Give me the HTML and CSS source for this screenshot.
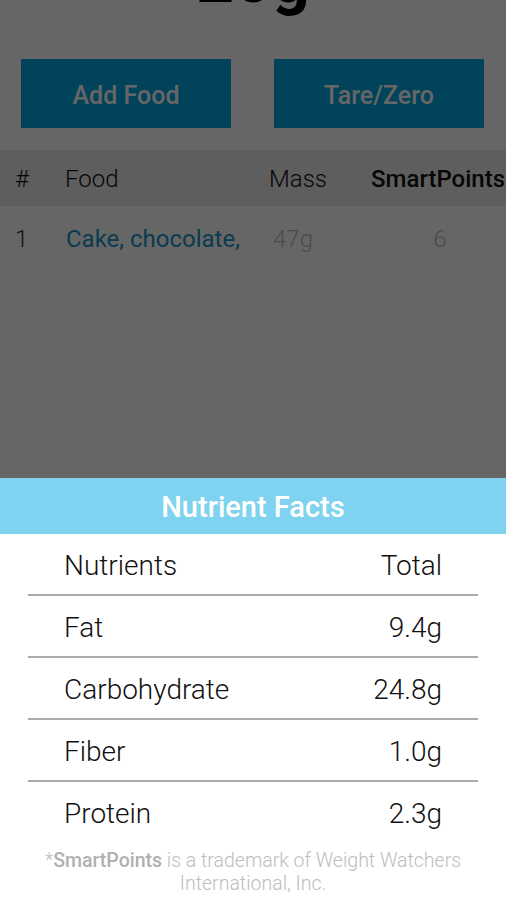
FILE: index.html
```html
<!DOCTYPE html>
<html lang="en">
<head>
<meta charset="utf-8">
<title>Scale</title>
<link rel="stylesheet" href="styles.css">
</head>
<body>
<div class="app">
  <div class="weight">20g</div>
  <div class="actions">
    <button class="btn">Add Food</button>
    <button class="btn">Tare/Zero</button>
  </div>
  <div class="food-table">
    <div class="food-row head">
      <span>#</span><span>Food</span><span>Mass</span><span class="sp">SmartPoints</span>
    </div>
    <div class="food-row">
      <span class="num">1</span><span class="food">Cake, chocolate,</span><span class="mass">47g</span><span class="pts">6</span>
    </div>
  </div>
</div>
<div class="overlay"></div>
<div class="sheet">
  <div class="sheet-title">Nutrient Facts</div>
  <div class="nutrients">
    <div class="n-row"><span>Nutrients</span><span>Total</span></div>
    <div class="n-row"><span>Fat</span><span>9.4g</span></div>
    <div class="n-row"><span>Carbohydrate</span><span>24.8g</span></div>
    <div class="n-row"><span>Fiber</span><span>1.0g</span></div>
    <div class="n-row"><span>Protein</span><span>2.3g</span></div>
  </div>
  <p class="note">*<b>SmartPoints</b> is a trademark of Weight Watchers International, Inc.</p>
</div>
</body>
</html>
```
FILE: styles.css
```css
html, body {
  margin: 0;
  padding: 0;
}
body {
  width: 506px;
  height: 900px;
  overflow: hidden;
  position: relative;
  background: #ffffff;
  font-family: Roboto, "Liberation Sans", sans-serif;
  color: #000;
}
.app {
  display: flex;
  flex-direction: column;
}
.weight {
  font-size: 66px;
  line-height: 72px;
  height: 72px;
  margin-top: -56px;
  font-weight: 700;
  text-align: center;
  color: #000;
}
.actions {
  display: flex;
  gap: 43px;
  padding: 0 22px 0 21px;
  margin-top: 43px;
}
.btn {
  flex: 1;
  height: 69px;
  border: 0;
  background: #00a8e4;
  color: #fff;
  font-family: Roboto, "Liberation Sans", sans-serif;
  font-size: 25px;
  font-weight: 500;
  padding: 4px 0 0;
}
.food-table {
  margin-top: 22px;
}
.food-row {
  display: grid;
  grid-template-columns: 50px 204px 102px 140px;
  align-items: center;
  padding-left: 15px;
  height: 66px;
  font-size: 24px;
  font-weight: 300;
  white-space: nowrap;
}
.food-row.head {
  height: 56px;
  background: #ebebeb;
  color: #111;
  padding-top: 2px;
  box-sizing: border-box;
}
.food-row .sp {
  font-weight: 500;
}
.num {
  color: #333;
}
.food {
  color: #1a96c8;
  font-weight: 400;
  overflow: hidden;
  padding-left: 1px;
}
.mass {
  color: #bcbcbc;
  padding-left: 4px;
}
.pts {
  color: #bcbcbc;
  text-align: center;
  padding-right: 2px;
}
.overlay {
  position: absolute;
  inset: 0;
  background: rgba(0, 0, 0, 0.6);
}
.sheet {
  position: absolute;
  left: 0;
  right: 0;
  top: 478px;
  bottom: 0;
  background: #ffffff;
}
.sheet-title {
  height: 56px;
  background: #80d3f0;
  color: #fff;
  font-size: 29px;
  font-weight: 500;
  display: flex;
  align-items: center;
  justify-content: center;
  padding-top: 2px;
  box-sizing: border-box;
}
.nutrients {
  margin: 0 28px;
}
.n-row {
  display: flex;
  justify-content: space-between;
  align-items: center;
  height: 62px;
  padding: 3px 36px 0;
  box-sizing: border-box;
  border-bottom: 2px solid #aaaaaa;
  font-size: 28px;
  font-weight: 300;
  color: #111;
}
.n-row:last-child {
  border-bottom: 0;
  height: 60px;
}
.note {
  margin: 7px 20px 0;
  text-align: center;
  font-size: 19.5px;
  line-height: 23px;
  font-weight: 300;
  color: #bdbdbd;
}
.note b {
  font-weight: 500;
  color: #b0b0b0;
}
```
